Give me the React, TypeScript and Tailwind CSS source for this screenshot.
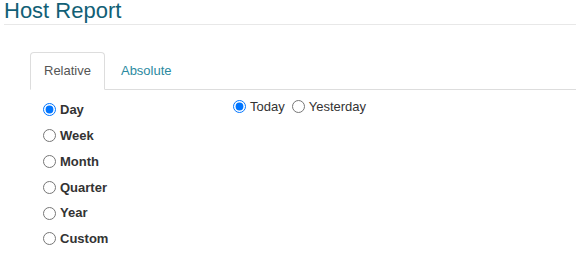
import { useState } from 'react';

const PERIODS = ['Day', 'Week', 'Month', 'Quarter', 'Year', 'Custom'];
const DAY_OPTIONS = ['Today', 'Yesterday'];

export default function App() {
  const [tab, setTab] = useState('relative');
  const [period, setPeriod] = useState('Day');
  const [day, setDay] = useState('Today');

  return (
    <div className="min-h-[272px] bg-white px-[4px] font-['Liberation_Sans',Arial,sans-serif] text-[13px] text-[#333]">
      <h1 className="h-[25px] border-b border-[#e8e8e8] text-[22px] leading-[22px] font-normal text-[#125f76]">
        Host Report
      </h1>

      <div className="ml-[26px] mt-[27px]">
        <ul className="flex border-b border-[#ddd]">
          <li className="-mb-px mr-[2px]">
            <button
              type="button"
              onClick={() => setTab('relative')}
              className={`flex h-[38px] items-center rounded-t-[4px] border px-[13px] ${
                tab === 'relative'
                  ? 'border-[#ddd] border-b-white bg-white text-[#555]'
                  : 'border-transparent text-[#2b8aa0]'
              }`}
            >
              Relative
            </button>
          </li>
          <li className="-mb-px">
            <button
              type="button"
              onClick={() => setTab('absolute')}
              className={`flex h-[38px] items-center rounded-t-[4px] border px-[13px] ${
                tab === 'absolute'
                  ? 'border-[#ddd] border-b-white bg-white text-[#555]'
                  : 'border-transparent text-[#2b8aa0]'
              }`}
            >
              Absolute
            </button>
          </li>
        </ul>

        <div className="flex pl-[13px]">
          <div className="w-[190px] pt-[7px]">
            {PERIODS.map((p) => (
              <label key={p} className="flex h-[25.8px] cursor-pointer items-center gap-[4px] font-bold">
                <input
                  type="radio"
                  name="period"
                  checked={period === p}
                  onChange={() => setPeriod(p)}
                  className="m-0 h-[13px] w-[13px]"
                />
                {p}
              </label>
            ))}
          </div>

          <div className="flex h-[25.8px] items-center pt-[8px]">
            {DAY_OPTIONS.map((d, i) => (
              <label
                key={d}
                className={`flex cursor-pointer items-center gap-[4px] ${i > 0 ? 'ml-[7px]' : ''}`}
              >
                <input
                  type="radio"
                  name="day"
                  checked={day === d}
                  onChange={() => setDay(d)}
                  className="m-0 h-[13px] w-[13px]"
                />
                {d}
              </label>
            ))}
          </div>
        </div>
      </div>
    </div>
  );
}
